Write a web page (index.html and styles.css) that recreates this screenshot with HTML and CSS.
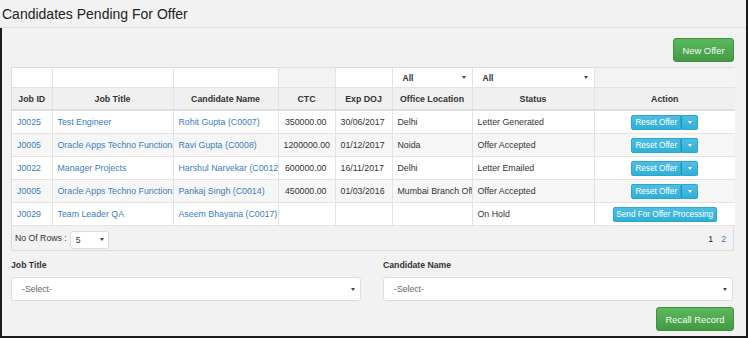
FILE: index.html
```html
<!DOCTYPE html>
<html>
<head>
    <meta charset="UTF-8">
    <title>Candidates Pending For Offer</title>
    <link rel="stylesheet" href="styles.css">
</head>
<body>
    <div class="page">
        <div class="title">Candidates Pending For Offer</div>
        <div class="content">
            <div class="toolbar">
                <button class="btn btn-success new-offer">New Offer</button>
            </div>

            <div class="panel">
                <table class="grid">
                    <colgroup>
                        <col style="width: 40px">
                        <col style="width: 121px">
                        <col style="width: 105px">
                        <col style="width: 57px">
                        <col style="width: 57px">
                        <col style="width: 80px">
                        <col style="width: 122px">
                        <col style="width: 141px">
                    </colgroup>
                    <thead>
                        <tr class="filter-row">
                            <td></td>
                            <td></td>
                            <td></td>
                            <td class="blank"></td>
                            <td></td>
                            <td class="filter"><div class="filter-select">All<span class="caret dark"></span></div></td>
                            <td class="filter"><div class="filter-select">All<span class="caret dark"></span></div></td>
                            <td class="blank"></td>
                        </tr>
                        <tr class="head-row">
                            <th>Job ID</th>
                            <th>Job Title</th>
                            <th>Candidate Name</th>
                            <th>CTC</th>
                            <th>Exp DOJ</th>
                            <th>Office Location</th>
                            <th>Status</th>
                            <th>Action</th>
                        </tr>
                    </thead>
                    <tbody>
                        <tr>
                            <td><a href="#">J0025</a></td>
                            <td><a href="#">Test Engineer</a></td>
                            <td><a href="#">Rohit Gupta (C0007)</a></td>
                            <td class="num">350000.00</td>
                            <td>30/06/2017</td>
                            <td>Delhi</td>
                            <td>Letter Generated</td>
                            <td class="action"><div class="btn-group"><span class="btn-info main">Reset Offer</span><span class="btn-info toggle"><span class="caret"></span></span></div></td>
                        </tr>
                        <tr>
                            <td><a href="#">J0005</a></td>
                            <td><a href="#">Oracle Apps Techno Functional</a></td>
                            <td><a href="#">Ravi Gupta (C0008)</a></td>
                            <td class="num">1200000.00</td>
                            <td>01/12/2017</td>
                            <td>Noida</td>
                            <td>Offer Accepted</td>
                            <td class="action"><div class="btn-group"><span class="btn-info main">Reset Offer</span><span class="btn-info toggle"><span class="caret"></span></span></div></td>
                        </tr>
                        <tr>
                            <td><a href="#">J0022</a></td>
                            <td><a href="#">Manager Projects</a></td>
                            <td><a href="#">Harshul Narvekar (C0012)</a></td>
                            <td class="num">600000.00</td>
                            <td>16/11/2017</td>
                            <td>Delhi</td>
                            <td>Letter Emailed</td>
                            <td class="action"><div class="btn-group"><span class="btn-info main">Reset Offer</span><span class="btn-info toggle"><span class="caret"></span></span></div></td>
                        </tr>
                        <tr>
                            <td><a href="#">J0005</a></td>
                            <td><a href="#">Oracle Apps Techno Functional</a></td>
                            <td><a href="#">Pankaj Singh (C0014)</a></td>
                            <td class="num">450000.00</td>
                            <td>01/03/2016</td>
                            <td>Mumbai Branch Office</td>
                            <td>Offer Accepted</td>
                            <td class="action"><div class="btn-group"><span class="btn-info main">Reset Offer</span><span class="btn-info toggle"><span class="caret"></span></span></div></td>
                        </tr>
                        <tr>
                            <td><a href="#">J0029</a></td>
                            <td><a href="#">Team Leader QA</a></td>
                            <td><a href="#">Aseem Bhayana (C0017)</a></td>
                            <td></td>
                            <td></td>
                            <td></td>
                            <td>On Hold</td>
                            <td class="action"><span class="btn-info send">Send For Offer Processing</span></td>
                        </tr>
                    </tbody>
                </table>
                <div class="grid-footer">
                    <div class="rows">
                        No Of Rows :
                        <div class="rows-select">5<span class="caret dark"></span></div>
                    </div>
                    <div class="pager">
                        <span class="current">1</span>
                        <a href="#">2</a>
                    </div>
                </div>
            </div>

            <div class="search">
                <div class="field">
                    <label>Job Title</label>
                    <div class="select">-Select-<span class="caret dark"></span></div>
                </div>
                <div class="field">
                    <label>Candidate Name</label>
                    <div class="select">-Select-<span class="caret dark"></span></div>
                </div>
            </div>
            <div class="toolbar bottom">
                <button class="btn btn-success recall">Recall Record</button>
            </div>
        </div>
    </div>
</body>
</html>
```

FILE: styles.css
```css
body {
    margin: 0;
    width: 748px;
    height: 338px;
    overflow: hidden;
    background-color: #f2f2f2;
    font-family: "Liberation Sans", Arial, sans-serif;
    color: #333;
}

.page {
    height: 338px;
    box-sizing: border-box;
    border-right: 2px solid #1c1c1c;
}

.title {
    height: 28px;
    line-height: 28px;
    box-sizing: border-box;
    padding-left: 2px;
    font-size: 14px;
    color: #222;
    border-bottom: 1px solid #dddddd;
}

.content {
    height: 310px;
    box-sizing: border-box;
    border-left: 2px solid #1c1c1c;
    border-bottom: 2px solid #1c1c1c;
    padding: 10px 12px 0 9px;
}

.toolbar {
    display: flex;
    justify-content: flex-end;
}

.btn {
    border: 1px solid #3e8f3e;
    border-radius: 3px;
    color: #f2fbf2;
    font-family: "Liberation Sans", Arial, sans-serif;
    font-size: 9.4px;
    padding: 0;
    cursor: pointer;
}

.btn-success {
    background: linear-gradient(#5cb85c, #439a43);
}

.new-offer {
    width: 61px;
    height: 24px;
}

.recall {
    width: 78px;
    height: 24px;
}

.toolbar.bottom {
    margin-top: 6px;
}

/* table panel */
.panel {
    margin-top: 5px;
    border: 1px solid #dddddd;
    background-color: #f2f2f2;
}

.grid {
    width: 100%;
    table-layout: fixed;
    border-collapse: collapse;
    font-size: 8.8px;
    background-color: #fff;
}

.grid td, .grid th {
    border: 1px solid #e3e3e3;
    padding: 0 5px;
    white-space: nowrap;
    overflow: hidden;
    text-align: left;
}

.grid tr > :first-child {
    border-left: none;
}

.grid tr > :last-child {
    border-right: none;
}

.filter-row td {
    height: 19px;
    border-top: none;
    background-color: #fff;
}

.filter-row td.blank {
    background-color: #f3f3f3;
}

.filter-row td.filter {
    padding: 0 2px 0 1px;
}

.filter-select {
    display: flex;
    align-items: center;
    justify-content: space-between;
    padding: 0 4px 0 9px;
    color: #333;
    font-weight: bold;
    font-size: 8.5px;
}

.head-row th {
    height: 21px;
    text-align: center;
    font-weight: bold;
    background-color: #f0f0f0;
    border-bottom: 2px solid #dedede;
}

.grid tbody td {
    height: 22px;
    color: #333;
}

.grid tbody tr:nth-child(even) td {
    background-color: #f6f6f6;
}

.grid a {
    color: #3a7dbf;
    text-decoration: none;
}

.grid td.num {
    text-align: right;
    padding-right: 8px;
}

.grid td.action {
    text-align: center;
}

.btn-group {
    display: inline-flex;
    vertical-align: middle;
}

.btn-info {
    display: inline-flex;
    align-items: center;
    justify-content: center;
    height: 15px;
    box-sizing: border-box;
    background: linear-gradient(#4fbde3, #2fb0d6);
    border: 1px solid #28a7d0;
    color: #fff;
    font-size: 8.2px;
}

.btn-info.main {
    width: 50px;
    border-radius: 2px 0 0 2px;
}

.btn-info.toggle {
    width: 17px;
    border-left: 1px solid #2596bb;
    border-radius: 0 2px 2px 0;
}

.btn-info.send {
    width: 104px;
    border-radius: 2px;
    vertical-align: middle;
}

.caret {
    display: inline-block;
    width: 0;
    height: 0;
    border-left: 2.5px solid transparent;
    border-right: 2.5px solid transparent;
    border-top: 3px solid #fff;
}

.caret.dark {
    border-top-color: #444;
}

/* footer under the table */
.grid-footer {
    height: 24px;
    display: flex;
    align-items: center;
    justify-content: space-between;
    padding: 0 7px 0 3px;
    font-size: 8.7px;
}

.rows {
    display: flex;
    align-items: center;
    gap: 3px;
}

.rows-select {
    width: 39px;
    height: 18px;
    box-sizing: border-box;
    display: flex;
    align-items: center;
    justify-content: space-between;
    padding: 0 4px 0 5px;
    background-color: #fff;
    border: 1px solid #dcdcdc;
    border-radius: 3px;
    margin-top: 3px;
}

.pager {
    display: flex;
    gap: 8px;
    margin-top: 2px;
}

.pager .current {
    color: #222;
}

.pager a {
    color: #3a7dbf;
    text-decoration: none;
}

/* search form */
.search {
    display: grid;
    grid-template-columns: 350px 350px;
    column-gap: 22px;
    margin-top: 6px;
}

.field label {
    display: block;
    font-size: 8.7px;
    font-weight: bold;
    line-height: 16px;
    margin-bottom: 4px;
}

.select {
    height: 24px;
    box-sizing: border-box;
    display: flex;
    align-items: center;
    justify-content: space-between;
    padding: 0 5px 0 10px;
    background-color: #fff;
    border: 1px solid #dddddd;
    border-radius: 3px;
    font-size: 8.7px;
    color: #666;
}
```
